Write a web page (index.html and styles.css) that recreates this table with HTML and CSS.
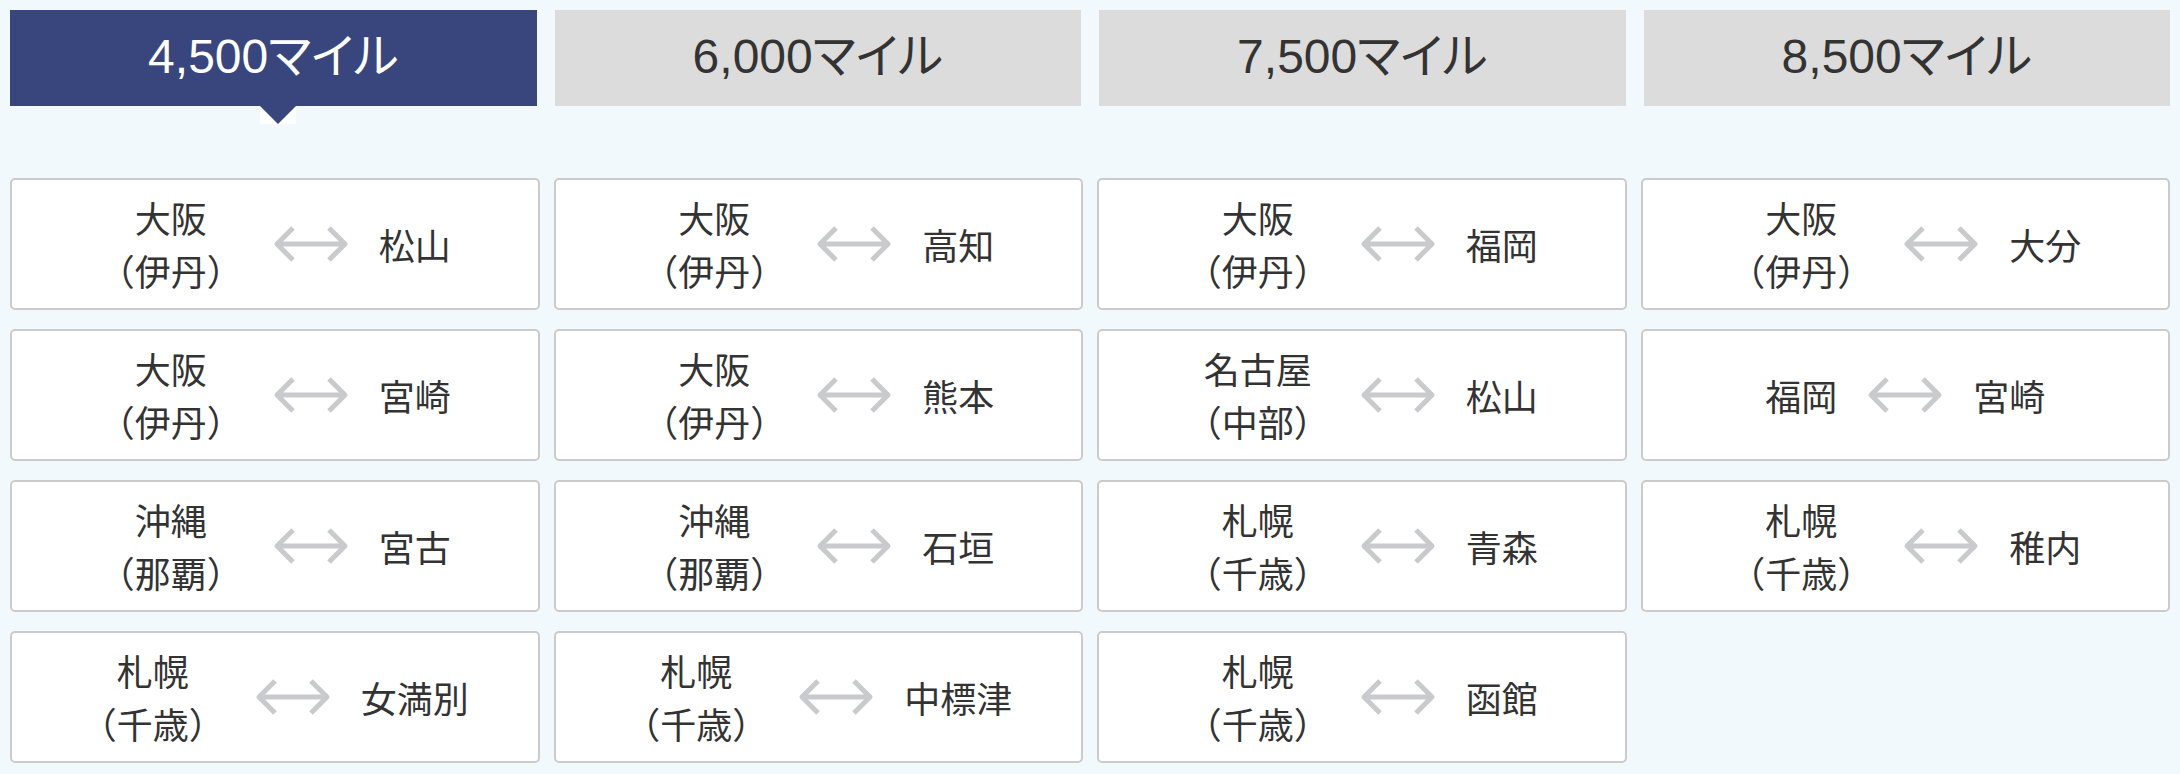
FILE: index.html
```html
<!DOCTYPE html>
<html lang="ja">
<head>
<meta charset="utf-8">
<title>マイル</title>
<link rel="stylesheet" href="styles.css">
</head>
<body>
<div class="wrap">
  <div class="tabs">
    <div class="tab active"><span>4,500マイル</span></div>
    <div class="tab"><span>6,000マイル</span></div>
    <div class="tab"><span>7,500マイル</span></div>
    <div class="tab"><span>8,500マイル</span></div>
  </div>
  <div class="cards">
    <div class="col">
      <div class="card"><div class="from">大阪<br>（伊丹）</div><svg class="arr" viewBox="0 0 76 38"><path d="M20 3 L4 19 L20 35 M4 19 H72 M56 3 L72 19 L56 35"/></svg><div class="to">松山</div></div>
      <div class="card"><div class="from">大阪<br>（伊丹）</div><svg class="arr" viewBox="0 0 76 38"><path d="M20 3 L4 19 L20 35 M4 19 H72 M56 3 L72 19 L56 35"/></svg><div class="to">宮崎</div></div>
      <div class="card"><div class="from">沖縄<br>（那覇）</div><svg class="arr" viewBox="0 0 76 38"><path d="M20 3 L4 19 L20 35 M4 19 H72 M56 3 L72 19 L56 35"/></svg><div class="to">宮古</div></div>
      <div class="card"><div class="from">札幌<br>（千歳）</div><svg class="arr" viewBox="0 0 76 38"><path d="M20 3 L4 19 L20 35 M4 19 H72 M56 3 L72 19 L56 35"/></svg><div class="to">女満別</div></div>
    </div>
    <div class="col">
      <div class="card"><div class="from">大阪<br>（伊丹）</div><svg class="arr" viewBox="0 0 76 38"><path d="M20 3 L4 19 L20 35 M4 19 H72 M56 3 L72 19 L56 35"/></svg><div class="to">高知</div></div>
      <div class="card"><div class="from">大阪<br>（伊丹）</div><svg class="arr" viewBox="0 0 76 38"><path d="M20 3 L4 19 L20 35 M4 19 H72 M56 3 L72 19 L56 35"/></svg><div class="to">熊本</div></div>
      <div class="card"><div class="from">沖縄<br>（那覇）</div><svg class="arr" viewBox="0 0 76 38"><path d="M20 3 L4 19 L20 35 M4 19 H72 M56 3 L72 19 L56 35"/></svg><div class="to">石垣</div></div>
      <div class="card"><div class="from">札幌<br>（千歳）</div><svg class="arr" viewBox="0 0 76 38"><path d="M20 3 L4 19 L20 35 M4 19 H72 M56 3 L72 19 L56 35"/></svg><div class="to">中標津</div></div>
    </div>
    <div class="col">
      <div class="card"><div class="from">大阪<br>（伊丹）</div><svg class="arr" viewBox="0 0 76 38"><path d="M20 3 L4 19 L20 35 M4 19 H72 M56 3 L72 19 L56 35"/></svg><div class="to">福岡</div></div>
      <div class="card"><div class="from">名古屋<br>（中部）</div><svg class="arr" viewBox="0 0 76 38"><path d="M20 3 L4 19 L20 35 M4 19 H72 M56 3 L72 19 L56 35"/></svg><div class="to">松山</div></div>
      <div class="card"><div class="from">札幌<br>（千歳）</div><svg class="arr" viewBox="0 0 76 38"><path d="M20 3 L4 19 L20 35 M4 19 H72 M56 3 L72 19 L56 35"/></svg><div class="to">青森</div></div>
      <div class="card"><div class="from">札幌<br>（千歳）</div><svg class="arr" viewBox="0 0 76 38"><path d="M20 3 L4 19 L20 35 M4 19 H72 M56 3 L72 19 L56 35"/></svg><div class="to">函館</div></div>
    </div>
    <div class="col">
      <div class="card"><div class="from">大阪<br>（伊丹）</div><svg class="arr" viewBox="0 0 76 38"><path d="M20 3 L4 19 L20 35 M4 19 H72 M56 3 L72 19 L56 35"/></svg><div class="to">大分</div></div>
      <div class="card"><div class="from">福岡</div><svg class="arr" viewBox="0 0 76 38"><path d="M20 3 L4 19 L20 35 M4 19 H72 M56 3 L72 19 L56 35"/></svg><div class="to">宮崎</div></div>
      <div class="card"><div class="from">札幌<br>（千歳）</div><svg class="arr" viewBox="0 0 76 38"><path d="M20 3 L4 19 L20 35 M4 19 H72 M56 3 L72 19 L56 35"/></svg><div class="to">稚内</div></div>
    </div>
  </div>
</div>
</body>
</html>
```

FILE: styles.css
```css
html, body {
  margin: 0;
  padding: 0;
  background: #f2f9fc;
}
.wrap {
  padding: 10px 10px 0;
  font-family: "Noto Sans CJK JP", sans-serif;
  color: #333;
}
.tabs {
  display: grid;
  grid-template-columns: repeat(4, 1fr);
  column-gap: 18px;
}
.tab {
  position: relative;
  height: 96px;
  display: flex;
  align-items: center;
  justify-content: center;
  background: #dcdcdc;
  color: #333;
  font-family: "Liberation Sans", "Noto Sans CJK JP", sans-serif;
  font-size: 48px;
  line-height: 1;
  font-feature-settings: "palt";
}
.tab span {
  display: block;
  margin-top: -2px;
}
.tab.active {
  background: #39467e;
  color: #fff;
}
.tab.active::after {
  content: "";
  position: absolute;
  top: 96px;
  left: calc(50% - 13px);
  width: 0;
  height: 0;
  border-top: 18px solid #39467e;
  border-left: 18px solid transparent;
  border-right: 18px solid transparent;
  background: #fff;
}
.cards {
  margin-top: 72px;
  display: grid;
  grid-template-columns: repeat(4, 1fr);
  column-gap: 14px;
}
.col {
  display: flex;
  flex-direction: column;
  gap: 19px;
}
.card {
  box-sizing: border-box;
  height: 132px;
  background: #fff;
  border: 2px solid #cbcbcb;
  border-radius: 5px;
  display: flex;
  align-items: center;
  justify-content: center;
  gap: 30px;
  font-size: 36px;
  line-height: 53px;
}
.from, .to {
  text-align: center;
  white-space: nowrap;
}
.arr {
  width: 76px;
  height: 38px;
  flex: none;
  fill: none;
  stroke: #c8cacd;
  stroke-width: 5;
  stroke-linejoin: round;
}
```
